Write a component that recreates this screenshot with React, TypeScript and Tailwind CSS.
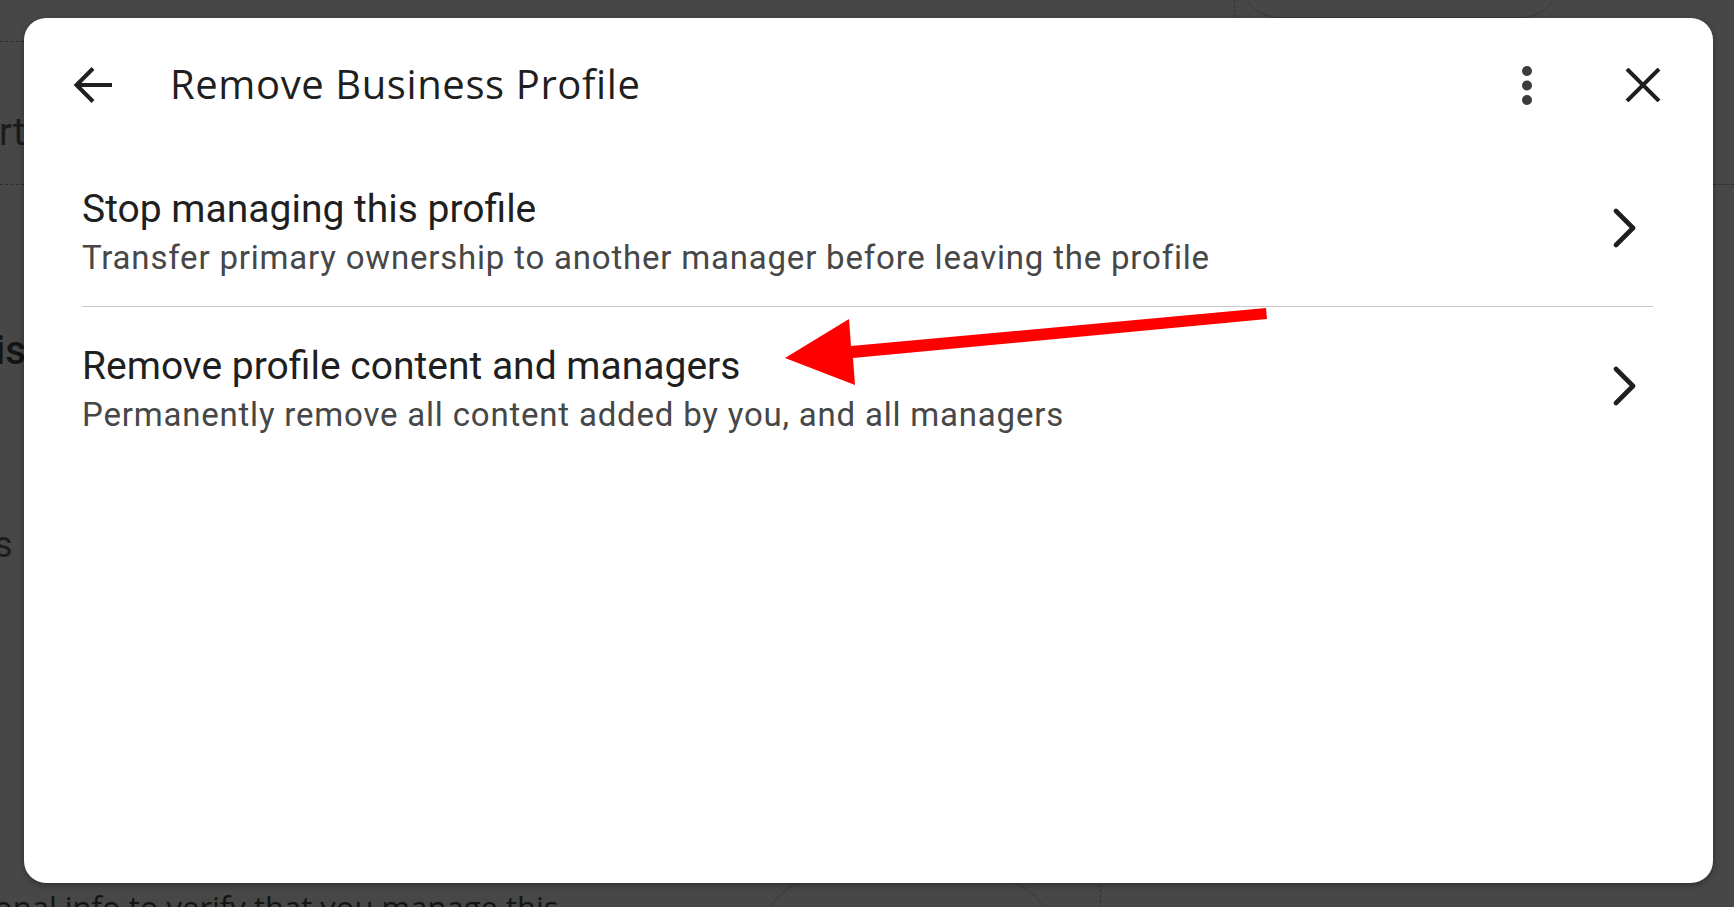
import React from "react";

const rows = [
  {
    title: "Stop managing this profile",
    subtitle: "Transfer primary ownership to another manager before leaving the profile",
  },
  {
    title: "Remove profile content and managers",
    subtitle: "Permanently remove all content added by you, and all managers",
  },
];

function Chevron() {
  return (
    <svg width="24" height="40" viewBox="0 0 24 40" fill="none" className="shrink-0">
      <polyline
        points="4,3 21,20 4,37"
        stroke="#1f1f1f"
        strokeWidth="4.6"
        strokeLinecap="round"
        strokeLinejoin="round"
      />
    </svg>
  );
}

export default function App() {
  return (
    <div className="relative w-[1734px] h-[907px] overflow-hidden bg-[#474747] pl-[24px] pt-[18px] font-['Roboto',sans-serif]">
      {/* page behind the scrim */}
      <div className="absolute left-0 top-[41px] w-[24px] border-t border-dashed border-[#2e2e2e]" />
      <div className="absolute left-0 top-[184px] w-[24px] border-t border-dashed border-[#2e2e2e]" />
      <div className="absolute right-0 top-[184px] w-[21px] border-t border-dashed border-[#2e2e2e]" />
      <span className="absolute left-[-1px] top-[104px] text-[38px] text-[#1c1c1c]">rt</span>
      <span className="absolute left-[-5px] top-[321px] text-[40px] font-medium text-[#141414]">is</span>
      <span className="absolute left-[-6px] top-[518px] text-[36px] text-[#1c1c1c]">s</span>
      <span className="absolute left-[-6px] top-[884px] text-[31px] font-medium text-[#141414] font-['Open_Sans',sans-serif]">
        onal info to verify that you manage this
      </span>
      <div className="absolute left-[761px] top-[878px] w-[292px] h-[120px] rounded-full border border-[#3a3a3a]" />
      <div className="absolute left-[1100px] top-[884px] h-[30px] border-l border-dashed border-[#333]" />
      <div className="absolute left-[1234px] top-0 h-[18px] border-l border-dashed border-[#333]" />
      <div className="absolute left-[1240px] top-[-60px] w-[320px] h-[78px] rounded-full border border-[#3a3a3a]" />

      {/* dialog */}
      <div className="relative w-[1689px] h-[865px] rounded-[22px] bg-white shadow-[0_2px_6px_rgba(0,0,0,0.35)]">
        <div className="flex h-[132px] items-center pl-[49px] pr-[52px]">
          <svg width="40" height="38" viewBox="0 0 40 38" fill="none" className="mt-[2px] shrink-0">
            <path d="M39 19H4" stroke="#1f1f1f" strokeWidth="4" />
            <path d="M20 2.5 3.5 19 20 35.5" stroke="#1f1f1f" strokeWidth="4" />
          </svg>
          <h1 className="ml-[57px] flex-1 text-[40px] leading-none text-[#1f1f1f] font-['Open_Sans',sans-serif] tracking-[0.6px]">
            Remove Business Profile
          </h1>
          <svg width="12" height="42" viewBox="0 0 12 42" className="mt-[4px] shrink-0">
            <circle cx="6" cy="6" r="5" fill="#3c3c3c" />
            <circle cx="6" cy="20.5" r="5" fill="#3c3c3c" />
            <circle cx="6" cy="35" r="5" fill="#3c3c3c" />
          </svg>
          <svg width="36" height="34" viewBox="0 0 36 34" fill="none" className="ml-[92px] mt-[2px] shrink-0">
            <path d="M2 1 34 33M34 1 2 33" stroke="#1f1f1f" strokeWidth="4" />
          </svg>
        </div>

        <div className="ml-[58px] mr-[60px]">
          {rows.map((row, i) => (
            <div
              key={row.title}
              className={`flex h-[157px] items-center pr-[17px] ${i === 0 ? "border-b-[1.5px] border-[#c7c9cc]" : ""}`}
            >
              <div className="flex-1 pt-[10px]">
                <div className="text-[39px] leading-[46px] text-[#1f1f1f]">{row.title}</div>
                <div className="mt-[3px] text-[33px] leading-[46px] text-[#474747] tracking-[0.8px]">{row.subtitle}</div>
              </div>
              <Chevron />
            </div>
          ))}
        </div>
      </div>

      {/* red annotation arrow */}
      <svg className="pointer-events-none absolute inset-0" width="1734" height="907" viewBox="0 0 1734 907">
        <polygon
          points="1266,308 1267,319 853,358 855,385 785,358 849,319 851,346"
          fill="#ff0000"
        />
      </svg>
    </div>
  );
}
